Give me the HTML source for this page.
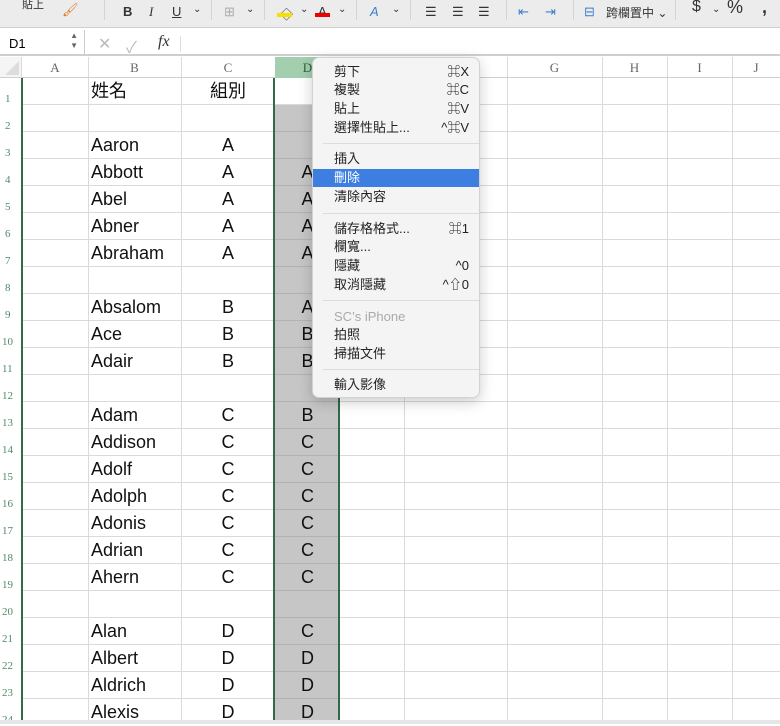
<!DOCTYPE html><html><head><meta charset="utf-8"><style>
*{margin:0;padding:0;box-sizing:border-box}
body{width:780px;height:724px;overflow:hidden;background:#fff;position:relative;font-family:"Liberation Sans","Noto Sans CJK TC",sans-serif}
.a{position:absolute}
#tb{left:0;top:0;width:780px;height:28px;background:#ececec;border-bottom:1px solid #d0d0d0}
#fb{left:0;top:28px;width:780px;height:28px;background:#fff;border-bottom:2px solid #cfcfcf}
.t{position:absolute;font-size:13px;color:#333;top:4px}
.sep{position:absolute;top:0;width:1px;height:20px;background:#d4d4d4}
#grid{left:22px;top:78px;width:758px;height:646px;
background-image:repeating-linear-gradient(to bottom,transparent 0 26px,#dadada 26px 27px);}
.vl{position:absolute;top:57px;width:1px;height:667px;background:#dadada}
.ch{position:absolute;top:57px;height:21px;font-family:"Liberation Serif",serif;font-size:13px;color:#666;text-align:center;line-height:21px;border-bottom:1px solid #cfcfcf}
.rh{position:absolute;left:0;width:21px;font-family:"Liberation Serif",serif;font-size:11px;color:#4f8a65;padding-left:5px;margin-top:3px}
.c{position:absolute;font-size:18px;color:#111;line-height:27px}
.cc{text-align:center}
#menu{left:312px;top:57px;width:168px;height:341px;background:#f4f4f4;border:1px solid #d2d2d2;border-radius:7px;box-shadow:0 4px 14px rgba(0,0,0,.2)}
.mi{position:absolute;left:21px;font-size:13px;color:#222;line-height:18px}
.ms{position:absolute;right:10px;font-size:13px;color:#222;line-height:18px}
.msep{position:absolute;left:10px;right:0;height:1px;background:#dcdcdc}
</style></head><body>
<div id="tb" class="a">
<span class="t" style="left:22px;top:-4px;font-size:11px">貼上</span>
<span class="t" style="left:62px;top:2px;color:#e07a2a">🖌</span>
<div class="sep" style="left:104px"></div>
<span class="t" style="left:123px;font-weight:bold">B</span>
<span class="t" style="left:149px;font-style:italic;font-family:'Liberation Serif',serif">I</span>
<span class="t" style="left:172px;text-decoration:underline">U</span>
<span class="t" style="left:193px;font-size:10px">⌄</span>
<div class="sep" style="left:211px"></div>
<span class="t" style="left:224px;color:#aaa">⊞</span><span class="t" style="left:246px;font-size:10px">⌄</span>
<div class="sep" style="left:264px"></div>
<span class="t" style="left:280px">◇</span><div class="a" style="left:277px;top:13px;width:15px;height:4px;background:#f5e000"></div><span class="t" style="left:300px;font-size:10px">⌄</span>
<span class="t" style="left:318px">A</span><div class="a" style="left:315px;top:13px;width:15px;height:4px;background:#e00"></div><span class="t" style="left:338px;font-size:10px">⌄</span>
<div class="sep" style="left:356px"></div>
<span class="t" style="left:370px;color:#3a7fd0;font-style:italic">A</span><span class="t" style="left:392px;font-size:10px">⌄</span>
<div class="sep" style="left:410px"></div>
<span class="t" style="left:425px">☰</span><span class="t" style="left:452px">☰</span><span class="t" style="left:478px">☰</span>
<div class="sep" style="left:506px"></div>
<span class="t" style="left:518px;color:#3a7fd0">⇤</span><span class="t" style="left:545px;color:#3a7fd0">⇥</span>
<div class="sep" style="left:573px"></div>
<span class="t" style="left:584px;color:#3a7fd0">⊟</span><span class="t" style="left:606px;font-size:12px">跨欄置中 ⌄</span>
<div class="sep" style="left:675px"></div>
<span class="t" style="left:692px;font-size:16px;top:-2px">$</span><span class="t" style="left:712px;font-size:10px">⌄</span><span class="t" style="left:727px;font-size:18px;top:-3px">%</span><span class="t" style="left:762px;font-size:18px;top:-3px;font-weight:bold">,</span>
</div>
<div id="fb" class="a">
<div class="a" style="left:0;top:2px;width:85px;height:25px;border-right:1px solid #ccc;font-size:13px;padding:6px 9px">D1<span style="position:absolute;right:6px;top:1px;font-size:8px;color:#666;line-height:10px">▲<br>▼</span></div>
<span class="t" style="left:98px;top:6px;color:#bbb;font-size:16px">✕</span>
<span class="t" style="left:126px;top:6px;color:#bbb;font-size:16px">✓</span>
<span class="t" style="left:158px;top:5px;font-family:'Liberation Serif',serif;font-style:italic;font-size:16px">fx</span>
<div class="a" style="left:180px;top:8px;width:1px;height:16px;background:#ddd"></div>
</div>
<div class="a" id="grid"></div>
<div class="a" style="left:0;top:57px;width:22px;height:21px;background:#f5f5f5;border-bottom:1px solid #cfcfcf"></div>
<div class="a" style="left:5px;top:61px;width:0;height:0;border-left:14px solid transparent;border-bottom:14px solid #ddd"></div>
<div class="vl" style="left:88px"></div><div class="vl" style="left:181px"></div><div class="vl" style="left:404px"></div><div class="vl" style="left:507px"></div><div class="vl" style="left:602px"></div><div class="vl" style="left:667px"></div><div class="vl" style="left:732px"></div><div class="vl" style="left:21px"></div>
<div class="ch" style="left:22px;width:66px">A</div>
<div class="ch" style="left:88px;width:93px">B</div>
<div class="ch" style="left:181px;width:94px">C</div>
<div class="ch" style="left:275px;width:65px;background:#a3cfae;color:#2b5e3c;border-bottom:none">D</div>
<div class="ch" style="left:340px;width:64px">E</div>
<div class="ch" style="left:404px;width:103px">F</div>
<div class="ch" style="left:507px;width:95px">G</div>
<div class="ch" style="left:602px;width:65px">H</div>
<div class="ch" style="left:667px;width:65px">I</div>
<div class="ch" style="left:732px;width:48px">J</div>
<div class="a" style="left:275px;top:105px;width:65px;height:619px;background:#c6c6c6;background-image:repeating-linear-gradient(to bottom,transparent 0 26px,#b2b2b2 26px 27px)"></div>
<div class="a" style="left:273px;top:78px;width:2px;height:646px;background:#2f6b45"></div>
<div class="a" style="left:338px;top:78px;width:2px;height:646px;background:#2f6b45"></div>
<div class="a" style="left:21px;top:78px;width:2px;height:646px;background:#2f6b45"></div>
<div class="rh" style="top:90px">1</div><div class="rh" style="top:117px">2</div><div class="rh" style="top:144px">3</div><div class="rh" style="top:171px">4</div><div class="rh" style="top:198px">5</div><div class="rh" style="top:225px">6</div><div class="rh" style="top:252px">7</div><div class="rh" style="top:279px">8</div><div class="rh" style="top:306px">9</div><div class="rh" style="top:333px;padding-left:2px">10</div><div class="rh" style="top:360px;padding-left:2px">11</div><div class="rh" style="top:387px;padding-left:2px">12</div><div class="rh" style="top:414px;padding-left:2px">13</div><div class="rh" style="top:441px;padding-left:2px">14</div><div class="rh" style="top:468px;padding-left:2px">15</div><div class="rh" style="top:495px;padding-left:2px">16</div><div class="rh" style="top:522px;padding-left:2px">17</div><div class="rh" style="top:549px;padding-left:2px">18</div><div class="rh" style="top:576px;padding-left:2px">19</div><div class="rh" style="top:603px;padding-left:2px">20</div><div class="rh" style="top:630px;padding-left:2px">21</div><div class="rh" style="top:657px;padding-left:2px">22</div><div class="rh" style="top:684px;padding-left:2px">23</div><div class="rh" style="top:711px;padding-left:2px">24</div>
<div class="c" style="left:91px;top:78px">姓名</div><div class="c cc" style="left:181px;width:94px;top:78px">組別</div>
<div class="c" style="left:91px;top:132px">Aaron</div><div class="c cc" style="left:181px;width:94px;top:132px">A</div>
<div class="c" style="left:91px;top:159px">Abbott</div><div class="c cc" style="left:181px;width:94px;top:159px">A</div><div class="c cc" style="left:275px;width:65px;top:159px">A</div>
<div class="c" style="left:91px;top:186px">Abel</div><div class="c cc" style="left:181px;width:94px;top:186px">A</div><div class="c cc" style="left:275px;width:65px;top:186px">A</div>
<div class="c" style="left:91px;top:213px">Abner</div><div class="c cc" style="left:181px;width:94px;top:213px">A</div><div class="c cc" style="left:275px;width:65px;top:213px">A</div>
<div class="c" style="left:91px;top:240px">Abraham</div><div class="c cc" style="left:181px;width:94px;top:240px">A</div><div class="c cc" style="left:275px;width:65px;top:240px">A</div>
<div class="c" style="left:91px;top:294px">Absalom</div><div class="c cc" style="left:181px;width:94px;top:294px">B</div><div class="c cc" style="left:275px;width:65px;top:294px">A</div>
<div class="c" style="left:91px;top:321px">Ace</div><div class="c cc" style="left:181px;width:94px;top:321px">B</div><div class="c cc" style="left:275px;width:65px;top:321px">B</div>
<div class="c" style="left:91px;top:348px">Adair</div><div class="c cc" style="left:181px;width:94px;top:348px">B</div><div class="c cc" style="left:275px;width:65px;top:348px">B</div>
<div class="c" style="left:91px;top:402px">Adam</div><div class="c cc" style="left:181px;width:94px;top:402px">C</div><div class="c cc" style="left:275px;width:65px;top:402px">B</div>
<div class="c" style="left:91px;top:429px">Addison</div><div class="c cc" style="left:181px;width:94px;top:429px">C</div><div class="c cc" style="left:275px;width:65px;top:429px">C</div>
<div class="c" style="left:91px;top:456px">Adolf</div><div class="c cc" style="left:181px;width:94px;top:456px">C</div><div class="c cc" style="left:275px;width:65px;top:456px">C</div>
<div class="c" style="left:91px;top:483px">Adolph</div><div class="c cc" style="left:181px;width:94px;top:483px">C</div><div class="c cc" style="left:275px;width:65px;top:483px">C</div>
<div class="c" style="left:91px;top:510px">Adonis</div><div class="c cc" style="left:181px;width:94px;top:510px">C</div><div class="c cc" style="left:275px;width:65px;top:510px">C</div>
<div class="c" style="left:91px;top:537px">Adrian</div><div class="c cc" style="left:181px;width:94px;top:537px">C</div><div class="c cc" style="left:275px;width:65px;top:537px">C</div>
<div class="c" style="left:91px;top:564px">Ahern</div><div class="c cc" style="left:181px;width:94px;top:564px">C</div><div class="c cc" style="left:275px;width:65px;top:564px">C</div>
<div class="c" style="left:91px;top:618px">Alan</div><div class="c cc" style="left:181px;width:94px;top:618px">D</div><div class="c cc" style="left:275px;width:65px;top:618px">C</div>
<div class="c" style="left:91px;top:645px">Albert</div><div class="c cc" style="left:181px;width:94px;top:645px">D</div><div class="c cc" style="left:275px;width:65px;top:645px">D</div>
<div class="c" style="left:91px;top:672px">Aldrich</div><div class="c cc" style="left:181px;width:94px;top:672px">D</div><div class="c cc" style="left:275px;width:65px;top:672px">D</div>
<div class="c" style="left:91px;top:699px">Alexis</div><div class="c cc" style="left:181px;width:94px;top:699px">D</div><div class="c cc" style="left:275px;width:65px;top:699px">D</div>
<div class="a" style="left:0;top:720px;width:780px;height:4px;background:#e6e6e6"></div>
<div id="menu" class="a">
<div class="mi" style="top:5px">剪下</div><div class="ms" style="top:5px">⌘X</div>
<div class="mi" style="top:23px">複製</div><div class="ms" style="top:23px">⌘C</div>
<div class="mi" style="top:42px">貼上</div><div class="ms" style="top:42px">⌘V</div>
<div class="mi" style="top:61px">選擇性貼上...</div><div class="ms" style="top:61px">^⌘V</div>
<div class="msep" style="top:85px"></div>
<div class="mi" style="top:92px">插入</div>
<div class="a" style="left:0;right:0;top:111px;height:18px;background:#3d7fe0"></div>
<div class="mi" style="top:111px;color:#fff">刪除</div>
<div class="mi" style="top:130px">清除內容</div>
<div class="msep" style="top:155px"></div>
<div class="mi" style="top:162px">儲存格格式...</div><div class="ms" style="top:162px">⌘1</div>
<div class="mi" style="top:180px">欄寬...</div>
<div class="mi" style="top:199px">隱藏</div><div class="ms" style="top:199px">^0</div>
<div class="mi" style="top:218px">取消隱藏</div><div class="ms" style="top:218px">^⇧0</div>
<div class="msep" style="top:242px"></div>
<div class="mi" style="top:250px;color:#aaa">SC’s iPhone</div>
<div class="mi" style="top:268px">拍照</div>
<div class="mi" style="top:287px">掃描文件</div>
<div class="msep" style="top:311px"></div>
<div class="mi" style="top:318px">輸入影像</div>
</div>
</body></html>
